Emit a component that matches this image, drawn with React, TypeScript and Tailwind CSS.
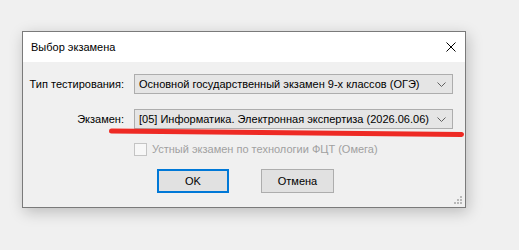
import React from "react";

function Chevron() {
  return (
    <svg width="9" height="5" viewBox="0 0 9 5" className="shrink-0">
      <path d="M0.5 0.5 L4.5 4.5 L8.5 0.5" fill="none" stroke="#606060" strokeWidth="1" />
    </svg>
  );
}

function Combo({ text }: { text: string }) {
  return (
    <div className="flex h-[20px] w-[319px] shrink-0 items-center justify-between border border-[#adadad] bg-[#e5e5e5] pl-[4px] pr-[6px]">
      <span className="whitespace-nowrap text-[11px] leading-none text-black">{text}</span>
      <Chevron />
    </div>
  );
}

export default function App() {
  return (
    <div className="h-[250px] w-[519px] overflow-hidden bg-[#f0f0f0] pl-[22px] pt-[31px] font-['Liberation_Sans',Arial,sans-serif]">
      <div className="relative h-[177px] w-[444px] border border-[#7a7a7a] bg-[#f0f0f0] shadow-[2px_4px_14px_rgba(0,0,0,0.22)]">
        <div className="flex h-[30px] items-center justify-between bg-white pl-[8px] pr-[9px]">
          <span className="whitespace-nowrap text-[11px] text-black">Выбор экзамена</span>
          <svg width="10" height="10" viewBox="0 0 10 10">
            <path d="M0.5 0.5 L9.5 9.5 M9.5 0.5 L0.5 9.5" stroke="#000" strokeWidth="1" />
          </svg>
        </div>
        <div className="flex flex-col pt-[12px]">
          <div className="flex items-center gap-[10px]">
            <span className="w-[101px] shrink-0 whitespace-nowrap text-right text-[11px] text-black">Тип тестирования:</span>
            <Combo text="Основной государственный экзамен 9-х классов (ОГЭ)" />
          </div>
          <div className="mt-[15px] flex items-center gap-[10px]">
            <span className="w-[101px] shrink-0 whitespace-nowrap text-right text-[11px] text-black">Экзамен:</span>
            <Combo text="[05] Информатика. Электронная экспертиза (2026.06.06)" />
          </div>
          <div className="ml-[111px] mt-[14px] flex items-center gap-[5px]">
            <div className="h-[13px] w-[13px] border border-[#c4c4c4] bg-[#f7f7f7]" />
            <span className="whitespace-nowrap text-[11px] leading-none text-[#a0a0a0]">Устный экзамен по технологии ФЦТ (Омега)</span>
          </div>
          <div className="ml-[134px] mt-[13px] flex gap-[32px]">
            <button className="flex h-[24px] w-[72px] items-center justify-center border-2 border-[#0078d7] bg-[#e1e1e1] text-[11px] text-black">
              OK
            </button>
            <button className="flex h-[24px] w-[73px] items-center justify-center border border-[#adadad] bg-[#e1e1e1] text-[11px] text-black">
              Отмена
            </button>
          </div>
        </div>
        <svg className="absolute bottom-[2px] right-[2px]" width="9" height="9" viewBox="0 0 9 9">
          <rect x="6" y="0" width="2" height="2" fill="#b8b8b8" />
          <rect x="3" y="3" width="2" height="2" fill="#b8b8b8" />
          <rect x="6" y="3" width="2" height="2" fill="#b8b8b8" />
          <rect x="0" y="6" width="2" height="2" fill="#b8b8b8" />
          <rect x="3" y="6" width="2" height="2" fill="#b8b8b8" />
          <rect x="6" y="6" width="2" height="2" fill="#b8b8b8" />
        </svg>
        <svg className="pointer-events-none absolute left-[84px] top-[95px]" width="362" height="12" viewBox="0 0 362 12">
          <path d="M4.5 4 Q180 5.5 354.5 7.5" fill="none" stroke="#ee2a24" strokeWidth="5" strokeLinecap="round" />
        </svg>
      </div>
    </div>
  );
}
